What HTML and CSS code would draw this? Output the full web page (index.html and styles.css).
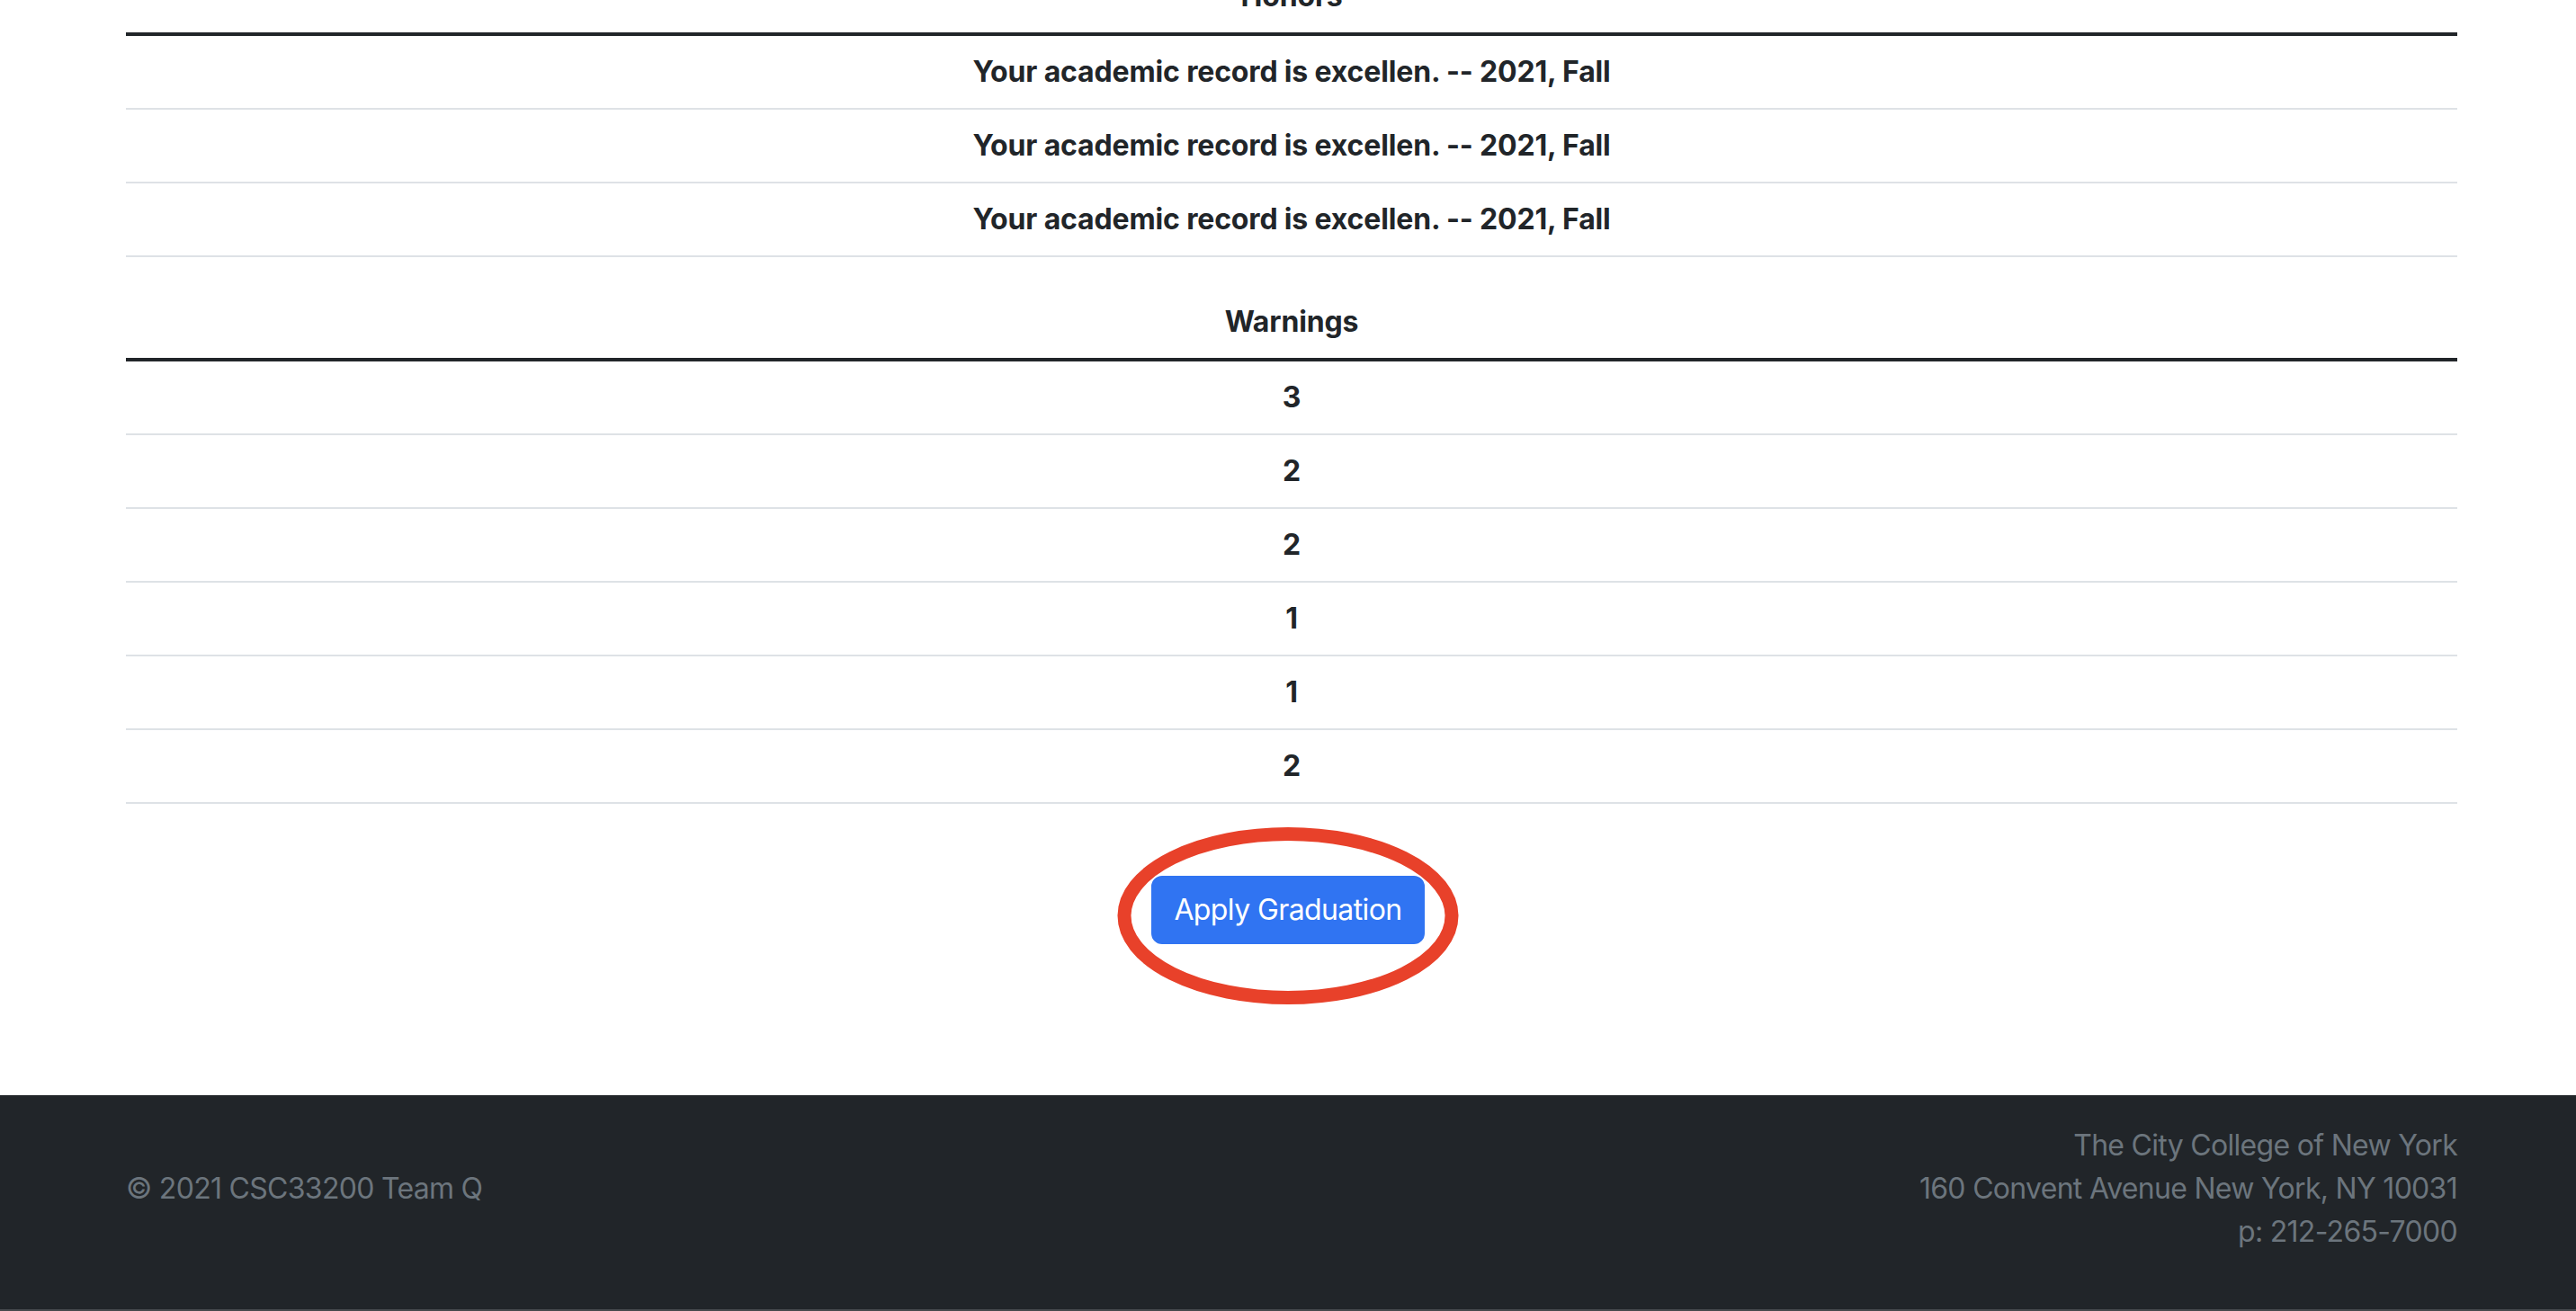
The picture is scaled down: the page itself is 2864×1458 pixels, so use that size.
FILE: index.html
```html
<!DOCTYPE html>
<html lang="en">
<head>
<meta charset="utf-8">
<title>Student Record</title>
<link rel="stylesheet" href="styles.css">
</head>
<body>
<main class="page">
  <div class="container">
    <table class="table">
      <thead><tr><th>Honors</th></tr></thead>
      <tbody>
        <tr><td>Your academic record is excellen. -- 2021, Fall</td></tr>
        <tr><td>Your academic record is excellen. -- 2021, Fall</td></tr>
        <tr><td>Your academic record is excellen. -- 2021, Fall</td></tr>
      </tbody>
    </table>
    <table class="table">
      <thead><tr><th>Warnings</th></tr></thead>
      <tbody>
        <tr><td>3</td></tr>
        <tr><td>2</td></tr>
        <tr><td>2</td></tr>
        <tr><td>1</td></tr>
        <tr><td>1</td></tr>
        <tr><td>2</td></tr>
      </tbody>
    </table>
  </div>
  <div class="actions">
    <div class="btn-wrap">
      <button class="btn-primary" type="button">Apply Graduation</button>
      <svg class="mark" width="400" height="230" viewBox="0 0 400 230" aria-hidden="true">
        <ellipse cx="200" cy="111.5" rx="182" ry="91" fill="none" stroke="#e8412a" stroke-width="15"/>
      </svg>
    </div>
  </div>
</main>
<footer class="footer">
  <div class="container footer-inner">
    <p class="copy">© 2021 CSC33200 Team Q</p>
    <address class="addr">
      <span>The City College of New York</span>
      <span>160 Convent Avenue New York, NY 10031</span>
      <span>p: 212-265-7000</span>
    </address>
  </div>
</footer>
</body>
</html>
```

FILE: styles.css
```css
* { box-sizing: border-box; }

html, body {
  margin: 0;
  padding: 0;
  background: #ffffff;
}

body {
  font-family: Inter, "Noto Sans", "Liberation Sans", sans-serif;
  font-size: 32px;
  line-height: 48px;
  color: #212529;
  height: 1458px;
  overflow: hidden;
  display: flex;
  flex-direction: column;
}

.page {
  margin-top: -44px;
}

.container {
  width: 2592px;
  margin-left: 140px;
}

.table {
  width: 100%;
  border-collapse: collapse;
  margin-bottom: 32px;
  text-align: center;
}

.table th,
.table td {
  padding: 16px 16px;
  font-weight: 700;
  letter-spacing: -0.15px;
}

.table thead th {
  border-bottom: 4px solid #212529;
}

.table tbody td {
  border-bottom: 2px solid #dee2e6;
}

.actions {
  display: flex;
  justify-content: center;
  margin-top: 80px;
}

.btn-wrap {
  position: relative;
}

.btn-primary {
  display: block;
  font-family: inherit;
  font-size: 32px;
  line-height: 48px;
  font-weight: 400;
  color: #ffffff;
  background: #3074f2;
  border: 2px solid #3074f2;
  border-radius: 12px;
  padding: 12px 0;
  width: 304px;
  height: 76px;
  white-space: nowrap;
  text-align: center;
  letter-spacing: -0.6px;
}

.mark {
  position: absolute;
  left: -48px;
  top: -67px;
  pointer-events: none;
}

.footer {
  margin-top: 168px;
  flex: 1;
  background: #212529;
  color: #6c757d;
  padding: 32px 0;
  border-bottom: 2px solid #46494d;
}

.footer-inner {
  display: flex;
  justify-content: space-between;
  align-items: center;
}

.copy {
  margin: 0;
  letter-spacing: -0.7px;
}

.addr {
  font-style: normal;
  display: flex;
  flex-direction: column;
  align-items: flex-end;
  letter-spacing: -0.7px;
}
```
